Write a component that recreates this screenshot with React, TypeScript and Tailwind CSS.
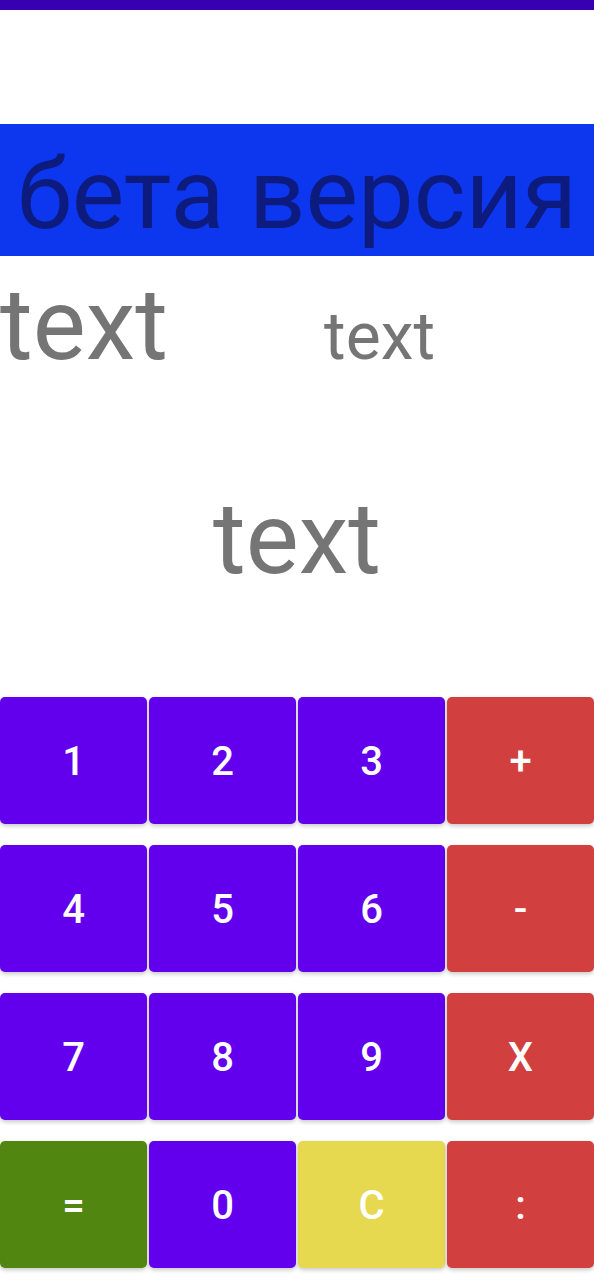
const keys = [
  { label: "1", color: "bg-[#6200ee]" },
  { label: "2", color: "bg-[#6200ee]" },
  { label: "3", color: "bg-[#6200ee]" },
  { label: "+", color: "bg-[#d23f3f]" },
  { label: "4", color: "bg-[#6200ee]" },
  { label: "5", color: "bg-[#6200ee]" },
  { label: "6", color: "bg-[#6200ee]" },
  { label: "-", color: "bg-[#d23f3f]" },
  { label: "7", color: "bg-[#6200ee]" },
  { label: "8", color: "bg-[#6200ee]" },
  { label: "9", color: "bg-[#6200ee]" },
  { label: "X", color: "bg-[#d23f3f]" },
  { label: "=", color: "bg-[#518711]" },
  { label: "0", color: "bg-[#6200ee]" },
  { label: "C", color: "bg-[#e6d84f]" },
  { label: ":", color: "bg-[#d23f3f]" },
];

export default function App() {
  return (
    <div className="min-h-[1280px] w-[594px] bg-white font-['Roboto',sans-serif]">
      <div className="h-[10px] bg-[#3700b3]" />

      <div className="mt-[114px] flex h-[132px] items-center justify-center overflow-hidden bg-[#0d37ee] pt-[8px]">
        <span className="whitespace-nowrap text-[99px] leading-none text-[#0c1b7d]">бета версия</span>
      </div>

      <div className="mt-[19px] flex items-baseline text-[#757575]">
        <span className="text-[100px] leading-none">text</span>
        <span className="ml-[156px] text-[66px] leading-none">text</span>
      </div>

      <div className="mt-[114px] text-center text-[100px] leading-none text-[#757575]">text</div>

      <div className="mt-[108px] grid grid-cols-4 gap-x-[2px] gap-y-[21px]">
        {keys.map((key) => (
          <button
            key={key.label}
            type="button"
            className={`flex h-[127px] items-center justify-center rounded-[5px] pt-[2px] text-[40px] font-medium text-white shadow-[0_2px_4px_rgba(0,0,0,0.22)] ${key.color}`}
          >
            {key.label}
          </button>
        ))}
      </div>
    </div>
  );
}
